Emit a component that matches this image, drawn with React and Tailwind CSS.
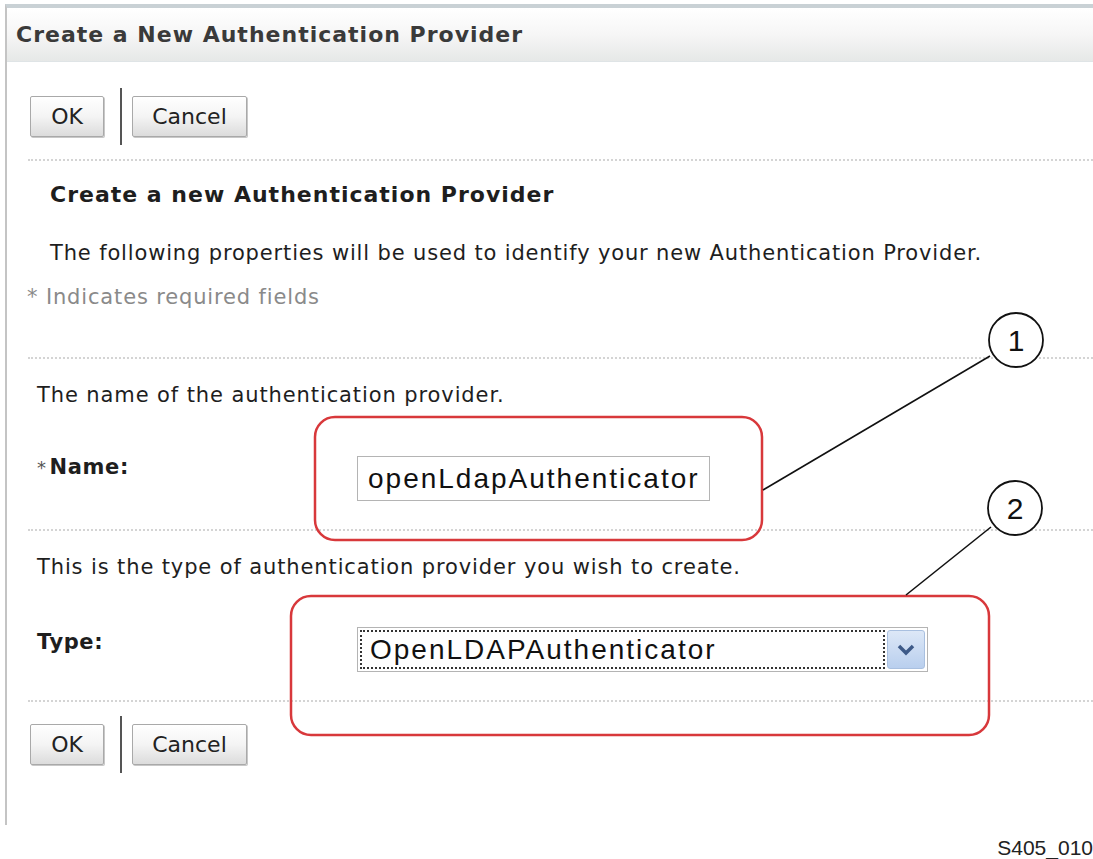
import React from 'react';

const ui = { fontFamily: '"DejaVu Sans", Tahoma, sans-serif' };
const arial = { fontFamily: '"Liberation Sans", Arial, sans-serif' };

function Btn({ children, w }) {
  return (
    <button
      className={`h-[41px] ${w} border border-[#a9a9a9] rounded-[2px] bg-gradient-to-b from-white via-[#f4f4f4] to-[#dcdcdc] text-[22px] text-[#222] shadow-[1px_1px_0_#c8c8c8] flex items-center justify-center`}
    >
      {children}
    </button>
  );
}

function ButtonRow() {
  return (
    <div className="h-[57px] flex items-center pl-[23px]">
      <Btn w="w-[74px]">OK</Btn>
      <div className="w-[2px] h-[57px] bg-[#555] ml-[16px] mr-[10px]" />
      <Btn w="w-[115px]">Cancel</Btn>
    </div>
  );
}

function Dots() {
  return <div className="ml-[21px] border-t-2 border-dotted border-[#d4d4d4]" />;
}

export default function App() {
  return (
    <div className="relative w-[1093px] h-[859px] bg-white overflow-hidden text-[#1e1e1e]" style={ui}>
      <div className="ml-[5px] mt-[4px] w-[1088px] h-[821px] border-l-2 border-l-[#c4c4c4] border-t-[4px] border-t-[#c9d1d5]">
        <div className="h-[54px] bg-gradient-to-b from-white via-[#f6f6f6] to-[#e6e8e7] border-b border-[#dfe4e6] flex items-center pl-[9px]">
          <span className="text-[22px] font-bold text-[#3a3a3a] tracking-[1px]">Create a New Authentication Provider</span>
        </div>

        <div className="h-[26px]" />
        <ButtonRow />
        <div className="h-[14px]" />
        <Dots />

        <div className="h-[18px]" />
        <div className="h-[30px] flex items-center pl-[43px] text-[22px] font-bold tracking-[1px]">
          Create a new Authentication Provider
        </div>
        <div className="h-[30px]" />
        <div className="h-[30px] flex items-center pl-[43px] text-[21px] tracking-[0.85px]">
          The following properties will be used to identify your new Authentication Provider.
        </div>
        <div className="h-[14px]" />
        <div className="h-[30px] flex items-center pl-[20px] text-[21px] text-[#8a8a8a] tracking-[0.85px]">
          * Indicates required fields
        </div>
        <div className="h-[44px]" />
        <Dots />

        <div className="h-[22px]" />
        <div className="h-[30px] flex items-center pl-[30px] text-[21px] tracking-[0.9px]">
          The name of the authentication provider.
        </div>
        <div className="h-[45px]" />
        <div className="h-[45px] flex items-center pl-[30px]">
          <div className="w-[320px] text-[21px] flex items-center -mt-[22px] tracking-[0.6px]">
            <span className="text-[#555] text-[18px] mr-[3px]">*</span>
            <span className="font-bold">Name:</span>
          </div>
          <div className="w-[353px] h-[45px] border border-[#b4b4b4] bg-white flex items-center pl-[10px] text-[28px] text-[#111] tracking-[2px]" style={arial}>
            openLdapAuthenticator
          </div>
        </div>
        <div className="h-[28px]" />
        <Dots />

        <div className="h-[22px]" />
        <div className="h-[30px] flex items-center pl-[30px] text-[21px] tracking-[0.88px]">
          This is the type of authentication provider you wish to create.
        </div>
        <div className="h-[44px]" />
        <div className="h-[45px] flex items-center pl-[30px]">
          <div className="w-[320px] text-[21px] font-bold -mt-[14px] tracking-[0.6px]">Type:</div>
          <div className="w-[571px] h-[45px] border border-[#b4b4b4] bg-white flex items-center p-[2px]">
            <div className="flex-1 h-full border-2 border-dotted border-[#333] flex items-center pl-[8px] text-[28px] text-[#111] tracking-[2px]" style={arial}>
              OpenLDAPAuthenticator
            </div>
            <div className="w-[38px] h-full ml-[2px] rounded-[3px] bg-gradient-to-b from-[#dde8f7] to-[#b9cfee] border border-[#a9c0e0] flex items-center justify-center">
              <svg width="18" height="12" viewBox="0 0 18 12">
                <path d="M2 2 L9 9 L16 2" fill="none" stroke="#3d5a88" strokeWidth="3.5" />
              </svg>
            </div>
          </div>
        </div>
        <div className="h-[28px]" />
        <Dots />
        <div className="h-[14px]" />
        <ButtonRow />
      </div>

      <div className="absolute right-[0px] top-[837px] text-[21px] leading-none text-[#222]" style={arial}>S405_010</div>

      {/* callout annotations */}
      <svg className="absolute inset-0 pointer-events-none" width="1093" height="859">
        <rect x="315" y="417" width="447" height="123" rx="20" fill="none" stroke="#d8383b" strokeWidth="2.5" />
        <rect x="291" y="596" width="698" height="139" rx="20" fill="none" stroke="#d8383b" strokeWidth="2.5" />
        <line x1="763" y1="490" x2="990" y2="356" stroke="#111" strokeWidth="1.6" />
        <line x1="906" y1="595" x2="991" y2="527" stroke="#111" strokeWidth="1.6" />
        <circle cx="1016" cy="340" r="27" fill="white" stroke="#111" strokeWidth="1.8" />
        <circle cx="1015" cy="508" r="27" fill="white" stroke="#111" strokeWidth="1.8" />
        <text x="1016" y="351" textAnchor="middle" fontSize="30" fill="#111" style={arial}>1</text>
        <text x="1015" y="519" textAnchor="middle" fontSize="30" fill="#111" style={arial}>2</text>
      </svg>
    </div>
  );
}
